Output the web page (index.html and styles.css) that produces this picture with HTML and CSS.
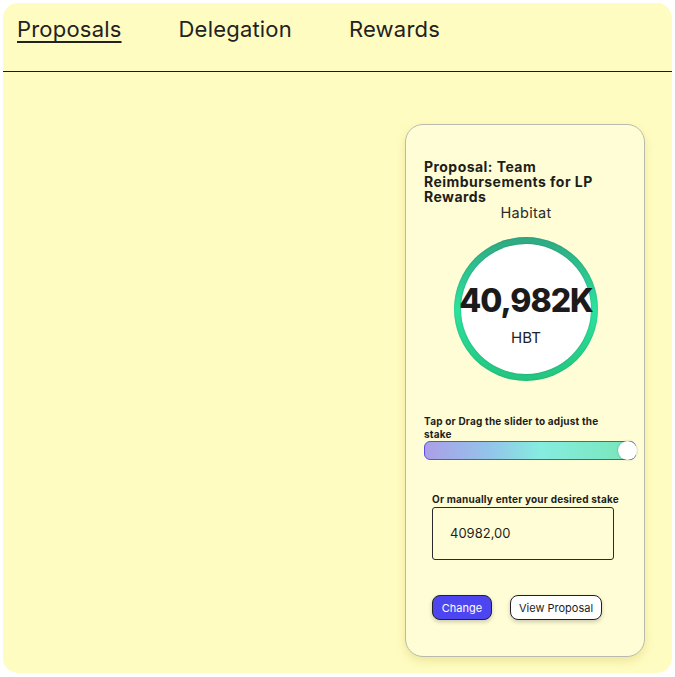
FILE: index.html
```html
<!DOCTYPE html>
<html>
<head>
<meta charset="utf-8">
<link rel="stylesheet" href="styles.css">
</head>
<body>
<div class="app">
  <header class="topbar">
    <nav class="nav">
      <a class="nav-link active">Proposals</a>
      <a class="nav-link">Delegation</a>
      <a class="nav-link">Rewards</a>
    </nav>
  </header>
  <main class="main">
    <section class="card">
      <h2 class="title">Proposal: Team Reimbursements for LP Rewards</h2>
      <div class="dao">Habitat</div>
      <div class="ring-wrap">
        <div class="ring">
          <div class="ring-inner">
            <div class="amount">40,982K</div>
            <div class="unit">HBT</div>
          </div>
        </div>
      </div>
      <div class="label slider-label">Tap or Drag the slider to adjust the stake</div>
      <div class="slider">
        <div class="thumb"></div>
      </div>
      <div class="manual">
        <div class="label">Or manually enter your desired stake</div>
        <div class="input">40982,00</div>
      </div>
      <div class="actions">
        <button class="btn primary">Change</button>
        <button class="btn secondary">View Proposal</button>
      </div>
    </section>
  </main>
</div>
</body>
</html>
```

FILE: styles.css
```css
* { box-sizing: border-box; }
html, body { margin: 0; padding: 0; background: #ffffff; }
body { font-family: Inter, "Noto Sans", sans-serif; color: #1d1d1b; }

.app {
  margin: 3px;
  width: 669px;
  height: 670px;
  background: #fffcc2;
  border-radius: 15px;
  overflow: hidden;
}

.topbar {
  height: 69px;
  border-bottom: 1.5px solid #1a1a1a;
}
.nav {
  display: flex;
  gap: 57px;
  padding: 12px 0 0 14px;
}
.nav-link {
  font-size: 22px;
  line-height: 28px;
  color: #22231f;
  letter-spacing: 0.2px;
}
.nav-link.active {
  text-decoration: underline;
  text-decoration-thickness: 1.5px;
  text-underline-offset: 4px;
}

.main {
  display: flex;
  justify-content: flex-end;
  padding: 52px 27px 0 0;
}

.card {
  width: 240px;
  height: 533px;
  background: #fffdd6;
  border: 1px solid #b9b9b0;
  border-radius: 18px;
  box-shadow: 0 4px 10px rgba(200, 190, 80, 0.35);
  padding: 34px 0 0 18px;
}

.title {
  margin: 0;
  font-size: 14px;
  line-height: 15px;
  font-weight: 700;
  width: 205px;
  color: #1d1d1b;
  letter-spacing: 0.45px;
}
.dao {
  text-align: center;
  font-size: 14.5px;
  line-height: 15px;
  margin-top: 1px;
  width: 204px;
  color: #2a2a28;
  letter-spacing: 0.3px;
}

.ring-wrap {
  width: 204px;
  display: flex;
  justify-content: center;
  margin-top: 17px;
}
.ring {
  width: 144px;
  height: 144px;
  border-radius: 50%;
  padding: 7px;
  background: linear-gradient(180deg, #2fa883 0%, #2be39e 50%, #23c57f 100%);
  box-shadow: inset 0 0 2px rgba(0,0,0,0.2);
}
.ring-inner {
  width: 100%;
  height: 100%;
  border-radius: 50%;
  background: #ffffff;
  display: flex;
  flex-direction: column;
  align-items: center;
  justify-content: center;
  box-shadow: 0 0 2px rgba(0,0,0,0.25);
}
.amount {
  font-size: 32px;
  font-weight: 800;
  letter-spacing: -1px;
  line-height: 36px;
  margin-top: 12px;
  color: #1b1b1b;
}
.unit {
  font-size: 15px;
  line-height: 18px;
  margin-top: 10px;
  color: #222;
}

.label {
  font-size: 10px;
  font-weight: 700;
  line-height: 13px;
  color: #1d1d1b;
  letter-spacing: 0.2px;
}
.slider-label {
  margin-top: 34px;
  width: 190px;
}
.slider {
  position: relative;
  margin-top: 0;
  width: 212px;
  height: 19px;
  border: 1.5px solid #5a4fe2;
  border-radius: 6px;
  background: linear-gradient(90deg, #ab9fe8 0%, #93c3ea 30%, #86ece0 55%, #77e6b8 100%);
}
.thumb {
  position: absolute;
  right: -2px;
  top: -1.5px;
  width: 19px;
  height: 19px;
  border-radius: 50%;
  background: #fff;
  box-shadow: 0 0 2px rgba(0,0,0,0.35);
}

.manual {
  margin: 33px 0 0 8px;
}
.input {
  margin-top: 1px;
  width: 182px;
  height: 53px;
  border: 1px solid #2b2b2b;
  border-radius: 3px;
  font-size: 13px;
  line-height: 51px;
  padding-left: 17px;
  color: #1f1f1f;
}

.actions {
  display: flex;
  gap: 18px;
  margin: 35px 0 0 8px;
}
.btn {
  font-family: Inter, "Noto Sans", sans-serif;
  font-size: 11px;
  height: 25px;
  border-radius: 8px;
  border: 1px solid #222;
  box-shadow: 0 2px 4px rgba(0,0,0,0.2);
  padding: 0;
  white-space: nowrap;
}
.btn.primary {
  background: #4d45f0;
  color: #fff;
  width: 60px;
}
.btn.secondary {
  background: #fff;
  color: #1d1d1b;
  width: 92px;
}
```
